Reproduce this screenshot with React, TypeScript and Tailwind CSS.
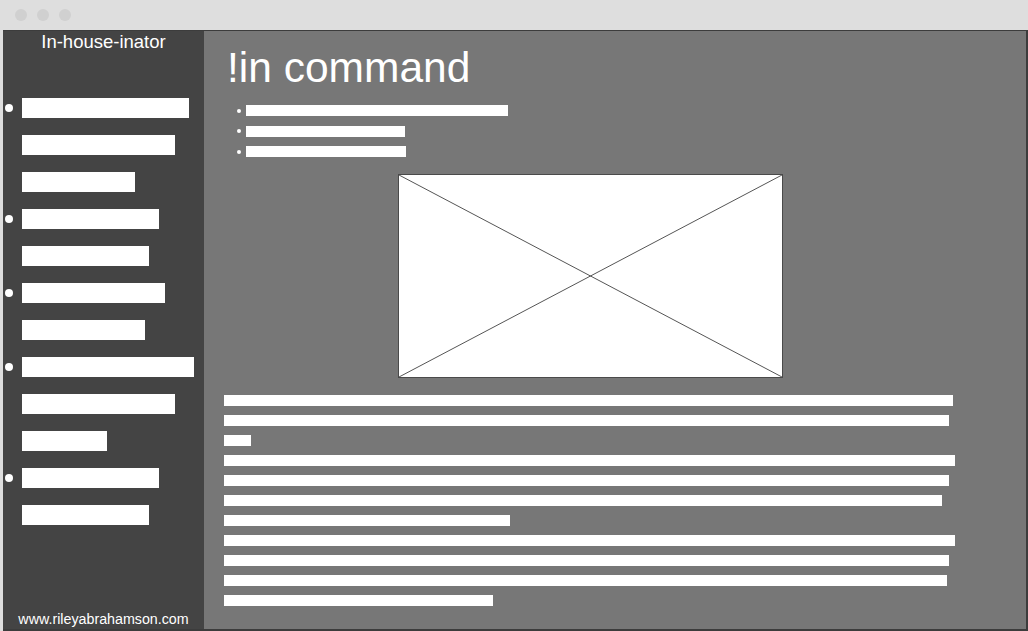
const navGroups = [
  [167, 153, 113],
  [137, 127],
  [143, 123],
  [172, 153, 85],
  [137, 127],
];

const bulletBars = [262, 159, 160];

const paragraphs = [
  [729, 725, 27],
  [731, 725, 718, 286],
  [731, 725, 723, 269],
];

function NavList() {
  return (
    <ul className="mt-[45px] flex flex-col gap-[17px]">
      {navGroups.flatMap((group, gi) =>
        group.map((w, i) => (
          <li key={`${gi}-${i}`} className="flex h-[20px] items-center">
            <span className="flex w-[19px] pl-[2px]">
              {i === 0 && <span className="size-[8px] rounded-full bg-white" />}
            </span>
            <span className="h-[20px] bg-white" style={{ width: w }} />
          </li>
        ))
      )}
    </ul>
  );
}

function Placeholder() {
  return (
    <div className="mx-auto mt-[17px] h-[204px] w-[385px] border border-[#4a4a4a] bg-white">
      <svg className="size-full" viewBox="0 0 100 100" preserveAspectRatio="none">
        <line x1="0" y1="0" x2="100" y2="100" stroke="#555" strokeWidth="1" vectorEffect="non-scaling-stroke" />
        <line x1="100" y1="0" x2="0" y2="100" stroke="#555" strokeWidth="1" vectorEffect="non-scaling-stroke" />
      </svg>
    </div>
  );
}

export default function App() {
  return (
    <div
      className="flex h-[631px] w-[1028px] flex-col bg-[#dedede]"
      style={{ fontFamily: '"Liberation Sans", Arial, sans-serif' }}
    >
      {/* window chrome */}
      <div className="flex h-[30px] shrink-0 items-center gap-[10px] pl-[15px]">
        <span className="size-[12px] rounded-full bg-[#d0d0d0]" />
        <span className="size-[12px] rounded-full bg-[#d0d0d0]" />
        <span className="size-[12px] rounded-full bg-[#d0d0d0]" />
      </div>

      <div className="ml-[3px] flex min-h-0 flex-1 border-t border-r-2 border-b-2 border-[#3c3c3c]">
        <aside className="flex w-[201px] shrink-0 flex-col bg-[#444444] text-white">
          <h1 className="text-center text-[18.5px] leading-[22px]">In-house-inator</h1>
          <NavList />
          <div className="mt-auto pb-[2px] text-center text-[14.25px] leading-[16px]">
            www.rileyabrahamson.com
          </div>
        </aside>

        <main className="flex-1 bg-[#777777] pt-[13px] pr-[69px] pl-[20px]">
          <h2 className="ml-[3px] text-[42.5px] leading-[48px] text-white">!in command</h2>

          <ul className="mt-[13px] flex flex-col gap-[9.5px] pl-[13px]">
            {bulletBars.map((w, i) => (
              <li key={i} className="flex h-[11px] items-center gap-[5px]">
                <span className="size-[4px] rounded-full bg-white" />
                <span className="h-[11px] bg-white" style={{ width: w }} />
              </li>
            ))}
          </ul>

          <Placeholder />

          <div className="mt-[17px] flex flex-col gap-[9px]">
            {paragraphs.flat().map((w, i) => (
              <div key={i} className="h-[11px] bg-white" style={{ width: w }} />
            ))}
          </div>
        </main>
      </div>
    </div>
  );
}
